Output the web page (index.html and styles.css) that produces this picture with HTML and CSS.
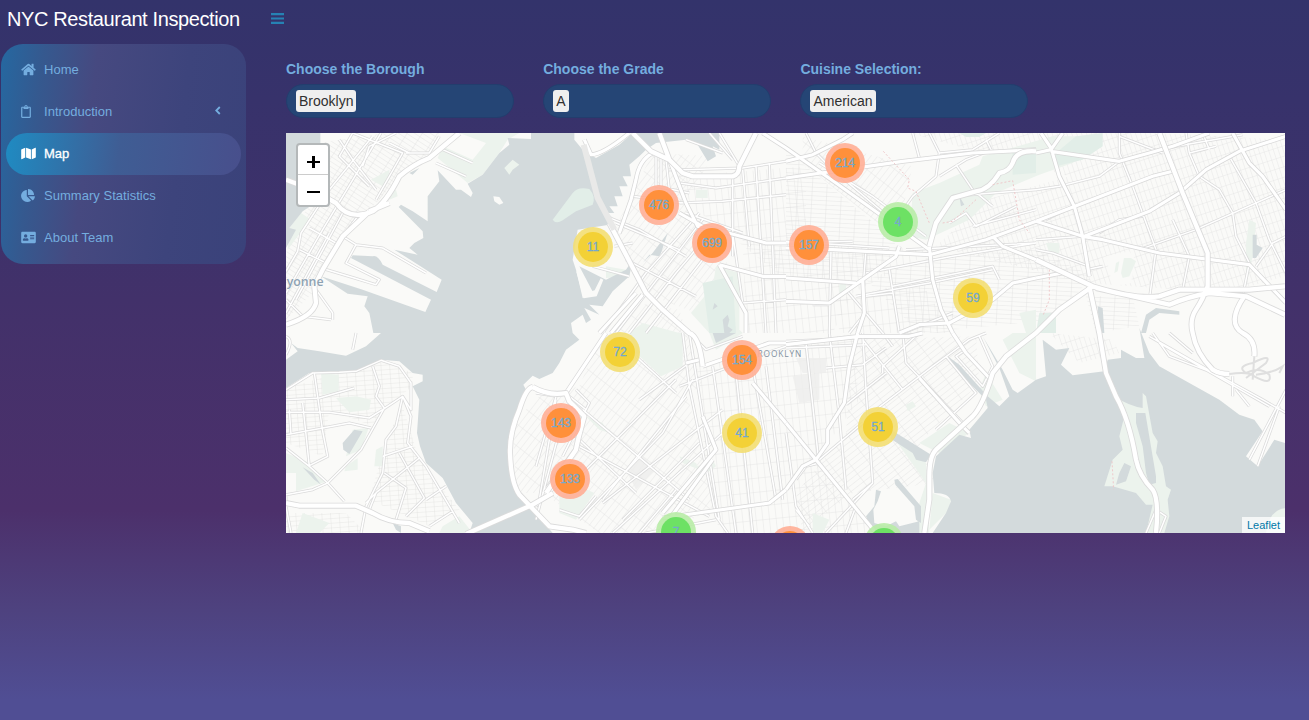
FILE: index.html
```html
<!DOCTYPE html>
<html lang="en">
<head>
<meta charset="utf-8">
<title>NYC Restaurant Inspection</title>
<link rel="stylesheet" href="styles.css">
</head>
<body>
<header class="topbar">
  <div class="brand">NYC Restaurant Inspection</div>
  <svg class="toggle" viewBox="0 0 13 11"><path d="M0 0h13v2.2H0zM0 4.4h13v2.2H0zM0 8.8h13V11H0z"/></svg>
</header>
<div class="layout">
  <aside class="sidebar">
    <nav class="menu">
      <a class="item"><span class="ico"><svg width="15" height="13" viewBox="0 0 576 512"><path d="M280.37 148.26L96 300.11V464a16 16 0 0 0 16 16l112.06-.29a16 16 0 0 0 15.92-16V368a16 16 0 0 1 16-16h64a16 16 0 0 1 16 16v95.64a16 16 0 0 0 16 16.05L464 480a16 16 0 0 0 16-16V300L295.67 148.26a12.19 12.19 0 0 0-15.3 0zM571.6 251.47L488 182.56V44.05a12 12 0 0 0-12-12h-56a12 12 0 0 0-12 12v72.61L318.47 43a48 48 0 0 0-61 0L4.34 251.47a12 12 0 0 0-1.6 16.9l25.5 31A12 12 0 0 0 45.15 301l235.22-193.74a12.19 12.19 0 0 1 15.3 0L530.9 301a12 12 0 0 0 16.9-1.6l25.5-31a12 12 0 0 0-1.7-16.93z"/></svg></span>Home</a>
      <a class="item"><span class="ico"><svg width="10" height="13" viewBox="0 0 384 512"><path d="M336 64h-80c0-35.3-28.7-64-64-64s-64 28.7-64 64H48C21.5 64 0 85.5 0 112v352c0 26.500 21.500 48 48 48h288c26.500 0 48-21.500 48-48V112c0-26.500-21.500-48-48-48zM192 40c13.300 0 24 10.700 24 24s-10.700 24-24 24-24-10.700-24-24 10.700-24 24-24zm144 418c0 3.300-2.700 6-6 6H54c-3.300 0-6-2.700-6-6V118c0-3.300 2.700-6 6-6h42v36c0 6.600 5.400 12 12 12h168c6.600 0 12-5.400 12-12v-36h42c3.300 0 6 2.700 6 6z"/></svg></span>Introduction<svg class="chev" width="6" height="9" viewBox="0 0 6 9"><path d="M4.800 1L1.300 4.500 4.800 8"/></svg></a>
      <a class="item active"><span class="ico"><svg width="15" height="13" viewBox="0 0 576 512"><path d="M0 117.66v346.32c0 11.32 11.43 19.06 21.94 14.86L160 416V32L20.12 87.95A32.006 32.006 0 0 0 0 117.66zM192 416l192 64V96L192 32v384zM554.06 33.16L416 96v384l139.88-55.95A31.996 31.996 0 0 0 576 394.34V48.020c0-11.320-11.430-19.060-21.940-14.860z"/></svg></span>Map</a>
      <a class="item"><span class="ico"><svg width="14" height="13" viewBox="0 0 544 512"><path d="M527.79 288H290.5l158.03 158.03c6.04 6.04 15.98 6.53 22.19.68 38.7-36.46 65.32-85.61 73.13-140.86 1.34-9.46-6.51-17.85-16.06-17.85zm-15.83-64.8C503.72 103.74 408.26 8.28 288.8.04 279.68-.59 272 7.1 272 16.24V240h223.77c9.14 0 16.82-7.68 16.19-16.8zM224 288V50.71c0-9.55-8.39-17.4-17.84-16.06C86.99 51.49-4.1 155.6.14 280.37 4.5 408.51 114.83 513.59 243.03 511.98c50.4-.63 96.97-16.87 135.26-44.03 7.9-5.6 8.42-17.23 1.57-24.08L224 288z"/></svg></span>Summary Statistics</a>
      <a class="item"><span class="ico"><svg width="15" height="13" viewBox="0 0 576 512"><path fill-rule="evenodd" d="M528 32H48C21.5 32 0 53.5 0 80v352c0 26.5 21.5 48 48 48h480c26.5 0 48-21.5 48-48V80c0-26.5-21.5-48-48-48zM176 128c35.300 0 64 28.700 64 64s-28.700 64-64 64-64-28.700-64-64 28.700-64 64-64zm112 236.800c0 10.600-10 19.200-22.400 19.200H86.400C74 384 64 375.400 64 364.800v-19.200c0-31.800 30.100-57.600 67.200-57.600h5c12.300 5.100 25.700 8 39.800 8s27.600-2.900 39.800-8h5c37.100 0 67.200 25.800 67.200 57.600zM352 288h160v32H352zM352 224h160v32H352zM352 160h160v32H352z"/></svg></span>About Team</a>
    </nav>
  </aside>
  <main class="content">
    <div class="filters">
      <div class="field"><label>Choose the Borough</label><div class="select"><span class="tag">Brooklyn</span></div></div>
      <div class="field"><label>Choose the Grade</label><div class="select"><span class="tag">A</span></div></div>
      <div class="field"><label>Cuisine Selection:</label><div class="select"><span class="tag">American</span></div></div>
    </div>
    <div class="map">
      <svg class="tiles" viewBox="0 0 2997 1200" preserveAspectRatio="none">
        <defs>
          <pattern id="g30" width="13" height="38" patternUnits="userSpaceOnUse" patternTransform="rotate(-57)"><path class="st" d="M0 0V38M0 0H13"/></pattern>
          <pattern id="g5" width="26" height="14" patternUnits="userSpaceOnUse" patternTransform="rotate(-4)"><path class="st" d="M0 0V14M0 0H26"/></pattern>
          <pattern id="g40" width="16" height="52" patternUnits="userSpaceOnUse" patternTransform="rotate(38)"><path class="st" d="M0 0V52M0 0H16"/></pattern>
          <pattern id="g37" width="48" height="15" patternUnits="userSpaceOnUse" patternTransform="rotate(-38)"><path class="st" d="M0 0V15M0 0H48"/></pattern>
          <pattern id="gf" width="20" height="42" patternUnits="userSpaceOnUse" patternTransform="rotate(-6)"><path class="st" d="M0 0V42M0 0H20"/></pattern>
          <pattern id="gb" width="44" height="13" patternUnits="userSpaceOnUse" patternTransform="rotate(3)"><path class="st" d="M0 0V13M0 0H44"/></pattern>
          <pattern id="gq" width="14" height="30" patternUnits="userSpaceOnUse" patternTransform="rotate(-18)"><path class="st" d="M0 0V30M0 0H14"/></pattern>
          <g id="minor">
            <path d="M0 480L110 290L285 0M0 415L35 355L45 300L130 170L260 10M30 500L170 240M0 540L130 300M160 20L200 80L270 170M230 100L250 40L330 0M200 0L350 60L270 200M70 285L150 330M40 350L120 390M0 500L50 550L135 560M90 470L140 540V560M105 405L205 435L270 455L280 440L180 390L210 335L170 310M210 335L290 345L420 420M360 60L430 60L460 10M310 30L370 60M170 310L215 250L310 210M200 0L160 70L250 160M470 50L560 90M450 90L540 130"/>
            <path d="M0 800L100 795L205 765M0 838H130L250 855L290 830M0 905L110 885L190 870L255 885M50 810L70 1000M85 720L110 895L125 970L70 998M10 830L15 905M260 700L280 760L270 790L295 825L225 950L125 1050L80 1070L0 1085M0 945L70 1000L125 1050L175 1105M0 1090V1120L15 1200M0 770L80 720L160 718L210 715L285 682L340 700L375 750V830L350 790M290 830L350 790L375 850L365 930L420 1000L520 1170M350 790L330 880L300 920L290 1020L240 1120L225 1200M290 970L380 940M240 1110L275 1075L400 975M340 960L415 1095L360 1150M295 1020L360 1065L330 1160M420 1100L480 1060M270 1080L250 1130M430 1180L500 1135"/>
            <path d="M0 665Q25 620 0 610M210 600L200 650"/>
            <g transform="translate(750 0)"><path d="M360 70V160L460 180M375 70V160M390 80L400 170M400 110H450M440 110L620 105L750 85M430 150L540 165L750 135M430 210L560 205L750 185M590 130V370M620 110L640 340M660 100L690 600M700 90L720 600M450 240L620 300M290 190L440 210M240 270L430 350M235 340L290 330M270 380L480 490M170 400L280 430M200 600L330 420L490 240M240 600L370 430L500 260M280 600L420 420L530 290M330 600L500 380M210 250L310 290L450 370M550 0L610 100M520 0L590 80M450 20L560 60M620 510L750 500M590 300L620 510M680 0L750 45"/></g>
            <g transform="translate(1500 0)"><path d="M60 0L90 60L140 110L400 330M100 90L260 190L420 310M380 0L400 75M430 0L460 60L450 130L380 190L310 290M460 130L540 80L620 50M460 60L560 50L640 0M510 95L560 170L620 220M500 190L620 180L750 170M360 350L750 330M240 420L500 370L750 330M0 325L310 345M135 350L130 600M240 350L230 480M0 330L200 325M210 490L430 450L620 410M310 410L340 600M320 460L620 400L640 440M180 470L290 600M240 490L320 480M80 515H130M190 600L230 550M350 600L500 540M600 20L620 60M560 280L750 230M490 270L540 240L570 280L690 220"/></g>
            <g transform="translate(2250 0)"><path d="M0 170L70 160L190 130L250 85L390 45L620 5M250 0V60L270 110L290 160L360 350L340 500M110 220L30 260M320 250L250 260L190 300M450 0L460 60L490 130L550 170L590 240L600 310L640 390M310 350L480 290L660 210L750 170M460 60L540 40M410 260L460 370L440 470M580 70L660 210L700 320L750 420M640 390L620 490M0 350L50 360L160 400M0 320L140 310M200 400L150 410M520 50L500 0M660 400L710 330L750 310M250 10L380 60"/></g>
            <g transform="translate(750 600)"><path d="M0 180L60 190L0 400M60 200L10 500M90 220L0 560M100 190L150 230M120 170L160 210L80 370M20 480L130 330M130 340L520 550M140 230L460 500M130 430L420 140M200 500L450 190M130 560L380 300L470 140M200 510L560 230M260 560L490 330M310 200L460 90M430 160L660 70L750 40M440 0L460 160L540 550L575 600M460 0L500 250L550 560M530 100L600 600M600 120L650 600M650 100L720 500M690 100L740 500M70 530L130 550L180 490M0 520L70 450M300 70L420 180M120 310L300 480M230 600L560 300M310 600L420 470M460 0L510 50L620 10M330 600L540 560"/></g>
            <g transform="translate(1500 600)"><path d="M0 25L100 20L380 5M0 45L240 35M130 0L160 250L180 470M230 0L240 170L260 450L200 500M60 30L100 400M120 105L230 95L300 45M230 20L350 170M270 230L440 100L550 20L600 0M350 0L360 90L540 280M290 0L320 40M290 120V100L400 0M180 215L300 120M100 380L230 270M480 70L570 180L450 290M100 390L60 400L30 440M120 600L260 450M0 300L30 520L80 600M180 600L210 520M30 530L70 580M580 10L620 100L590 160L510 70L540 50"/></g>
            <g transform="translate(2250 600)"><path d="M340 10L480 90L680 200L750 240M370 30L700 220M350 0L400 70L560 130M750 170L640 380M730 220L665 400M590 130V190M400 0L470 60M600 170L640 220M330 600L360 530L390 550L370 600"/></g>
          </g>
          <g id="major">
            <g transform="translate(750 0)"><path d="M350 60Q310 80 300 140L285 200L250 300M145 20L165 65Q200 65 280 0M300 480L190 600M320 485L225 600M550 395L630 540V600M400 80L450 210L485 280L500 280L690 330L750 330M430 240L500 280M550 395L680 430H750"/></g>
            <g transform="translate(1500 0)"><path d="M0 85L80 65L170 20L200 0M0 135L350 85L560 60L750 50M-70 0L0 45L150 150L430 350M0 345L140 350L430 365L600 320L750 265M340 340L330 370L230 440L130 510L0 505M230 440L235 540L215 600M0 435L210 450M430 340L440 440L465 530L500 600M620 310L650 340L750 380M340 600L400 575L490 570L620 500L680 450L750 435"/></g>
            <g transform="translate(2250 0)"><path d="M15 0L45 45L70 130L115 220L140 310L160 430M0 60L45 50L80 0M45 55L250 85L340 60L410 40L520 0M0 265L350 130L410 115M0 265L140 310L200 320L370 360L640 395L750 510M145 310L340 235L430 180L510 110L610 55L750 10M590 0L640 90L680 130L750 230M0 435L80 420"/></g>
            <g transform="translate(750 600)"><path d="M90 180L210 0M380 555L700 510L750 470M500 250L540 350L380 540M650 150L750 270M450 90L490 80M500 100L700 30H750M370 600L530 380"/></g>
            <g transform="translate(1500 600)"><path d="M0 35L220 10H370L410 0M215 0L190 100L175 210L125 290V330L90 380L50 400L0 470M0 270L90 380L270 600M500 0L540 60L610 135M400 135L530 280L550 300"/></g>
          </g>
          <g id="hwy">
            <path d="M0 140L80 170L150 210Q190 265 260 235Q300 210 340 130Q380 95 430 75L520 0M250 235L170 310L110 410L85 460L90 510Q80 550 0 575M310 210L250 235M0 1110L40 1118H210L260 1140Q310 1170 370 1170L430 1195"/>
            <path d="M540 1203L740 1115L800 1080"/>
            <path d="M740 762Q720 765 700 830Q670 900 672 960Q675 1050 700 1085L790 1180L860 1190L900 1200M740 762Q790 790 840 780L850 805L895 850Q875 920 870 950L780 1080"/>
            <path d="M1040 0L1095 55L1150 80L1190 120L1220 130H1340Q1360 125 1360 100L1410 0M1120 0L1150 80M970 270L1080 480L1130 530L1210 600Q1240 610 1250 700"/>
            <path d="M2250 55Q2190 50 2180 90Q2170 115 2140 120Q2110 170 2070 175L2000 195L1950 270L1930 340"/>
            <path d="M2620 0L2690 180L2765 360V460Q2750 500 2730 530Q2710 560 2720 600Q2730 660 2780 710Q2800 723 2830 723M2250 380L2420 460Q2550 500 2620 490L2680 470H2890L2997 460M2430 465L2650 515Q2710 490 2770 480L2880 490L2997 545M2875 490Q2820 570 2870 600Q2910 620 2905 670"/>
            <path d="M2420 460L2320 530L2250 600L2160 670L2120 720Q2090 820 2060 850L1950 950Q1930 970 1930 1030V1100L1915 1200"/>
            <path d="M2410 460L2440 600L2460 720L2490 790Q2530 860 2550 980Q2560 1030 2600 1070Q2620 1100 2610 1200"/>
          </g>
        </defs>
        <rect class="land" width="2997" height="1200"/>
        <g>
          <path fill="url(#g30)" d="M100 30L300 0H460L440 60L330 140L280 200L170 310L80 480L0 560V360L60 230L130 170Z"/>
          <path fill="url(#g5)" d="M0 765L160 720L285 680L380 720L380 760L290 830L260 880L130 830L110 970L0 930ZM300 920L350 820L400 980L520 1130L430 1180L250 1100ZM0 1140H180L240 1200H0Z"/>
          <path fill="url(#g40)" d="M1100 60L1280 70L1200 200L1260 300L1330 400L1230 540L1100 490L1000 340L980 300ZM1050 510L1180 530L1250 760L1200 780L1300 1110L1150 1200L940 1200L770 1080L690 1080L680 870L760 790L880 760L930 640Z"/>
          <path fill="url(#gf)" d="M1230 700L1700 600L1720 800L1590 980L1770 1200H1300L1260 1000ZM1180 130L1560 100V340L1370 310L1220 230ZM1370 320L1950 350L1700 480L1640 600H1380Z"/>
          <path fill="url(#gb)" d="M1500 50L1800 300L1850 360L1500 340ZM1360 330L1830 360L1740 440L1500 440ZM1940 370L2250 350L2420 430L2300 560L1900 600L1740 440Z"/>
          <path fill="url(#g37)" d="M1700 620L2070 610L2080 750L1900 930L1950 1050L1700 1080L1550 1200L1530 1080L1680 900Z"/>
          <path fill="url(#g40)" d="M1550 10L1880 100L1850 230L1800 290L1550 90Z"/>
          <path fill="url(#gq)" d="M1870 0H2600L2997 20V430L2820 480L2400 450L1950 340L2100 200L2350 130ZM2290 600L2480 620L2500 660L2380 690Z"/>
          <path fill="url(#gb)" d="M2400 490L2540 490L2560 580L2430 600Z"/>
          <path fill="url(#gf)" d="M1650 500L1900 440L2000 600H1660Z"/>
        </g>
        <path class="land" d="M2460 370L2530 355L2550 380L2535 450L2480 460Z"/>
        <g class="park">
          <path d="M520 0H700L665 20L640 60L590 125L545 150L455 75L470 40L560 80L600 30Z"/>
          <path d="M45 240L75 260L35 310L5 350L10 285ZM255 140L310 110V140L290 160ZM310 180L330 170L335 190L310 200Z"/>
          <path d="M105 720L158 725V775L110 785ZM150 795L210 790L255 800L250 830L190 838ZM200 890L248 885L225 950L180 970ZM0 960L60 985L125 1045L30 1075V1020L0 1020ZM50 1140L130 1170L100 1200H30ZM470 1180L520 1150L560 1200H460ZM270 950L290 940V1000H265ZM180 1000L215 975V1010L175 1015Z"/>
          <path d="M1290 400L1360 420V590L1370 600L1290 650L1270 600L1215 540L1280 460ZM960 400L1020 410L1030 430L960 435ZM1230 170H1265V195H1230ZM1070 570L1180 600H1190V700L1125 730L1050 660L1030 600ZM820 1090L880 1060L925 1080L870 1160L820 1140ZM900 850L950 870L970 900L940 890ZM1180 970L1230 990L1240 1010L1190 990ZM1235 1000L1280 980L1290 1000L1235 1040Z"/>
          <path d="M1880 180L1960 150L2080 95L2090 70L2300 10H2450L2420 50L2360 90L2260 125L2130 180L2050 260L1920 320L1870 310ZM1660 450H1680V480H1660ZM2200 540L2250 530V600H2220ZM2890 260L2910 270L2900 370L2880 460L2880 330ZM2280 330H2320V360H2290Z"/>
          <path d="M2514 375H2535L2550 385L2530 430L2510 435L2505 420ZM2490 390L2500 385L2495 415L2485 420Z"/>
          <path d="M2150 620L2200 720L2250 745V600H2180ZM2100 720L2150 800L2100 820L2080 770ZM1900 930L1990 870L2050 900L1960 960ZM1820 910L1920 990L1930 1200H1890L1900 1110L1920 1050ZM1580 1140L1630 1160L1610 1200H1580ZM1940 1080L1995 1100L1990 1130L1930 1190ZM1860 815L1880 805L1890 820L1865 835Z"/>
        </g>
        <g class="green"><path d="M2310 60L2370 10L2450 0V40L2390 80L2310 100ZM2180 55L2250 60V120L2180 125ZM1250 450L1340 430L1350 600H1270ZM2260 540H2310V600H2250ZM2020 0H2100L2080 12H2040Z"/></g>
        <g class="water">
          <path d="M0 0H103V35L130 60V170L80 215L50 235L10 285L30 290L0 345Z"/>
          <path d="M735 0V18L665 15L670 35L640 60L590 125L545 152L560 180L555 192L525 170L510 170L455 112L460 145L425 190V265L380 235L345 215L338 222L410 295L412 315L385 330L370 345L395 365L325 350L467 440L452 477L290 395Q275 365 260 370L200 367L195 375L300 430L435 500L418 537L230 470L105 430L185 482L245 490L235 520L250 540L262 600L285 600L240 640L180 668L100 655L35 645L15 630L35 655L0 680V765L70 720L160 718L210 715L285 680L340 685L380 720L410 725V745L380 760L400 800L393 900L402 940L420 990L470 1035L510 1110L560 1170L550 1200H800L740 1130L690 1080L668 960L680 860L720 770L712 755L740 728L760 738L800 720L820 690L840 650L880 620L860 600L855 570L890 545L900 570L915 560L895 525L940 545L910 515L950 520L980 475L1030 430L1040 380L1020 410L960 440L880 400L925 485L890 495L870 410L860 380L875 290L970 275L980 255L965 240H985L970 220H995L985 190H1010L1000 160H1025L1010 130H1035L1030 95L1060 70L1080 50L1110 30L1200 20L1235 35L1265 85L1290 70L1280 40L1300 50V0H1040L1000 35L930 75L890 50L865 20V0Z"/>
          <path d="M2250 740L2195 780L2180 770L2150 710L2090 610L2140 705L2170 790L2140 820L2105 790L2020 695L1985 670L2010 710L2100 800L2105 825L2050 890L2055 915L2020 905L1950 970L1940 1020L1945 1080Q1990 1080 1995 1105L1980 1140L1940 1200H2997V930L2965 920L2915 1000L2880 970L2930 895L2905 860L2860 845L2800 800L2620 700L2590 660L2560 585L2575 675L2550 675L2505 650V675L2465 680L2455 715L2360 727L2325 695L2350 645L2310 650L2270 620L2280 730Z"/>
          <path d="M1815 890L1935 965L1920 988L1890 980L1880 960L1815 918ZM1825 1040L1835 1038L1905 1120V1170L1890 1160L1885 1120L1828 1055ZM1770 1070L1785 1075L1775 1105L1762 1130L1765 1170L1800 1180L1830 1165L1840 1180L1900 1165V1200H1760L1740 1150L1765 1120Z"/>
          <path d="M170 930L205 890L230 895L190 963L172 950ZM50 1003L80 1020L105 1055L85 1040ZM1280 600L1350 600L1290 630ZM1285 510L1295 520L1280 530ZM1060 400L1100 360L1145 300L1125 360L1120 370L1090 365L1070 390ZM2565 600L2580 545L2610 525L2680 535V545L2620 540L2590 560L2580 600ZM2900 305H2912V335L2930 345L2910 375H2900ZM2435 520L2450 525L2455 600H2440ZM2020 190L2035 215L2025 220ZM370 120L400 105L380 125ZM320 1170L345 1180V1200L330 1190ZM1325 580L1340 590L1330 600H1315L1310 560L1325 545L1330 560Z"/>
        </g>
        <path class="green" d="M800 260L860 180Q875 160 910 168Q930 190 920 215L870 235L830 262Q810 275 800 260Z"/>
        <path class="land" d="M871 416L879 412L900 480L926 472L944 436L952 440L932 490L893 496Z"/>
        <path class="park" d="M655 105L680 80L700 95L680 110L670 125Z"/><path class="land" d="M622 190L640 192L652 210L640 215L625 205Z"/>
        <path class="park" d="M2485 790Q2530 820 2570 825V780L2580 790L2600 900L2615 925L2610 960L2630 1000L2640 1060L2655 1070L2645 1100L2650 1150L2635 1200H2580L2600 1115L2580 1115L2550 1080L2480 1060L2455 1060L2480 980L2510 950L2500 910L2515 850Z"/>
        <path class="water" d="M2550 840H2578L2610 1030V1050L2590 1055L2580 1020L2570 940L2550 870ZM2500 1020L2515 990L2535 1000L2520 1045L2490 1055Z"/>
        <path class="park" d="M2940 1200Q2950 1130 2997 1126V1200Z"/>
        <path class="block" d="M1530 675H1620V720H1550ZM1520 730L1600 720V800L1540 810ZM1020 1010L1060 960L1110 1010L1050 1070Z"/>
        <use href="#minor" class="minor-case"/><use href="#minor" class="minor-fill"/>
        <use href="#major" class="major-case"/><use href="#major" class="major-fill"/>
        <use href="#hwy" class="hwy-case"/><use href="#hwy" class="hwy-fill"/>
        <path class="airport" d="M2830 723Q2890 715 2905 730Q2960 760 2950 725Q2920 700 2880 720Q2850 700 2900 690Q2960 660 2940 690L2880 735M2905 670L2900 740M2910 725Q2960 720 2990 700L2980 720"/>
        <path class="bridge" d="M893 35L935 195L985 290"/>
        <path class="bound" d="M1792 55L1870 140L1865 165L1890 175L1930 270M1970 270L2000 265L2070 200M2120 155L2180 143L2200 260L2230 300M2478 985L2483 1070M2290 410V500L2270 550"/>
        <text class="town" x="2" y="460">yonne</text>
        <text class="boro" x="1396" y="671">BROOKLYN</text>
      </svg>
      <div class="zoom"><span><i class="plus"></i></span><span><i class="minus"></i></span></div>
      <div class="pin o" style="left:353px;top:52px"><b>476</b></div>
      <div class="pin o" style="left:406px;top:90px"><b>699</b></div>
      <div class="pin y" style="left:287px;top:94px"><b>11</b></div>
      <div class="pin o" style="left:539px;top:10px"><b>214</b></div>
      <div class="pin o" style="left:503px;top:92px"><b>157</b></div>
      <div class="pin g" style="left:592px;top:69px"><b>4</b></div>
      <div class="pin y" style="left:667px;top:145px"><b>59</b></div>
      <div class="pin y" style="left:314px;top:199px"><b>72</b></div>
      <div class="pin o" style="left:436px;top:207px"><b>154</b></div>
      <div class="pin y" style="left:436px;top:280px"><b>41</b></div>
      <div class="pin o" style="left:255px;top:270px"><b>143</b></div>
      <div class="pin o" style="left:264px;top:326px"><b>133</b></div>
      <div class="pin y" style="left:572px;top:274px"><b>51</b></div>
      <div class="pin g" style="left:370px;top:379px"><b>7</b></div>
      <div class="pin o" style="left:484px;top:393px"><b></b></div>
      <div class="pin g" style="left:578px;top:390px"><b></b></div>
      <div class="credit">Leaflet</div>
    </div>
  </main>
</div>
</body>
</html>
```
FILE: styles.css
```css
* { box-sizing: border-box; }
body {
  margin: 0;
  height: 720px;
  overflow: hidden;
  font: 14px/20px "Liberation Sans", Arial, sans-serif;
  color: #74addf;
  background: linear-gradient(to bottom, #33336b 0, #37326b 100px, #42316a 300px, #4c306b 510px, #4e427f 610px, #504e94 700px);
}
.topbar { display: flex; align-items: center; height: 38px; padding-left: 7px; }
.brand { width: 264px; font-size: 20px; letter-spacing: -.38px; color: #fff; white-space: nowrap; }
.toggle { width: 13px; height: 11px; margin-top: -1px; fill: #2682b4; }
.layout { display: flex; }
.sidebar { width: 256px; height: 682px; padding: 6px 10px 0 1px; flex: none; }
.menu {
  height: 220px;
  padding: 5px;
  border-radius: 22px;
  background: linear-gradient(97deg, #2568a1 0%, #35598f 16%, #464980 36%, #3d447c 70%, #3a427a 100%);
}
.item { display: flex; align-items: center; height: 42px; padding-left: 15px; font-size: 13px; letter-spacing: .03px; border-radius: 21px; }
.ico { display: flex; width: 23px; margin-top: -1px; }
.ico svg { fill: currentColor; }
.chev { margin: -3px 20px 0 auto; fill: none; stroke: currentColor; stroke-width: 1.8; }
.active { color: #fff; -webkit-text-stroke: .3px #fff; background: linear-gradient(97deg, #1f8bc2 0%, #3f5d94 48%, #484f8c 100%); }
.content { flex: 1; padding: 21px 24px 0 30px; }
.filters { display: flex; gap: 29.4px; height: 74px; }
.field { width: 227.8px; }
.field label { display: block; height: 25px; font-weight: bold; }
.select { display: flex; align-items: center; height: 34px; padding: 0 9px; border: 1px solid #233d6d; border-radius: 17px; background: #254575; }
.tag { padding: 1px 3px; border-radius: 3px; background: #efefef; color: #303030; }
.map { position: relative; width: 999px; height: 400px; overflow: hidden; background: #fafaf8; }
.tiles { display: block; width: 999px; height: 400px; }
.land { fill: #fafaf8; }
.water { fill: #d3dadc; }
.park { fill: #ecf3ed; }
.green { fill: #e2eee8; }
.block { fill: #eeeeec; opacity: .8; }
.st { fill: none; stroke: #e0e0df; stroke-width: 2.2; }
.minor-case, .minor-fill, .major-case, .major-fill, .hwy-case, .hwy-fill { fill: none; stroke-linejoin: round; }
.minor-case { stroke: #dbdbdb; stroke-width: 9; }
.minor-fill { stroke: #fff; stroke-width: 4.5; }
.major-case { stroke: #d8d8d8; stroke-width: 14; }
.major-fill { stroke: #fff; stroke-width: 9.5; }
.hwy-case { stroke: #dbdbdb; stroke-width: 18; }
.hwy-fill { stroke: #fff; stroke-width: 13; }
.airport { fill: none; stroke: #dfdfdf; stroke-width: 6; }
.bridge { fill: none; stroke: #e9e9e8; stroke-width: 18; }
.bound { fill: none; stroke: #efc9cb; stroke-width: 3; stroke-dasharray: 6 6; }
.town { font: 600 37px "Open Sans", sans-serif; fill: #8ea2b3; stroke: #fafaf8; stroke-width: 3; paint-order: stroke; }
.boro { font: 25px "Open Sans", sans-serif; letter-spacing: 2.6px; fill: #8190a0; stroke: #fafaf8; stroke-width: 3; paint-order: stroke; }
.zoom { position: absolute; left: 10px; top: 10px; width: 34px; height: 64px; border: 2px solid #b4b8b9; border-radius: 4px; background: #fff; }
.zoom span { display: flex; align-items: center; justify-content: center; height: 30px; padding-top: 4px; }
.zoom span:first-child { border-bottom: 1px solid #ccc; }
.plus, .minus { width: 13px; height: 2px; background: #000; }
.plus { background: linear-gradient(#000, #000) center / 13px 2px no-repeat, linear-gradient(#000, #000) center / 3px 12px no-repeat; height: 12px; }
.pin { position: absolute; width: 40px; height: 40px; padding: 5px; border-radius: 50%; }
.pin b { display: block; width: 30px; height: 30px; border-radius: 50%; font: 12px/30px "Liberation Sans", Arial, sans-serif; text-align: center; color: #76a9cc; -webkit-text-stroke: .3px #76a9cc; }
.o { background: rgba(255, 174, 149, .9); }
.o b { background: #ff903b; }
.y { background: rgba(243, 222, 114, .9); }
.y b { background: #f3d136; }
.g { background: rgba(184, 236, 166, .9); }
.g b { background: #6de164; }
.credit { position: absolute; right: 0; bottom: 0; width: 43px; height: 16px; padding-left: 5px; font-size: 11px; line-height: 16px; color: #0078a8; background: rgba(255, 255, 255, .75); }
```
